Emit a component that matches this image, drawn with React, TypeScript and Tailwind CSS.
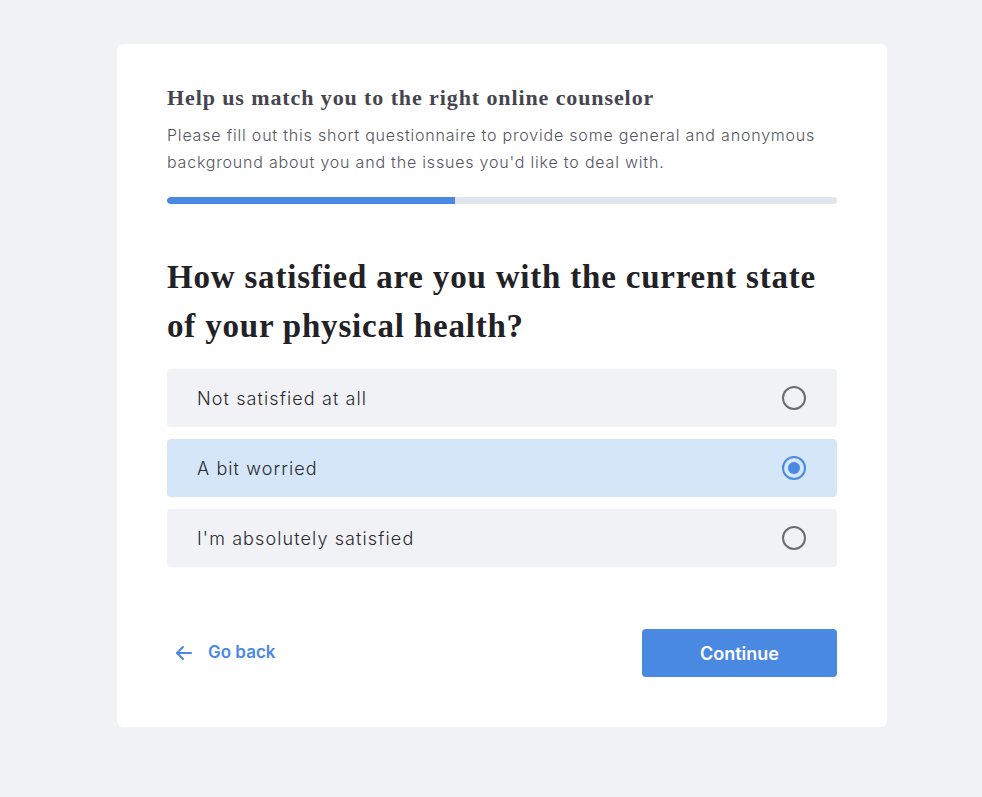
import React, { useState } from 'react'

const options = ['Not satisfied at all', 'A bit worried', "I'm absolutely satisfied"]

const serif = { fontFamily: '"Liberation Serif", "DejaVu Serif", serif' }

export default function App() {
  const [selected, setSelected] = useState(1)

  return (
    <div className="min-h-[797px] w-full bg-[#f1f2f6] pl-[117px] pt-[44px] font-['Inter',sans-serif]">
      <div className="w-[770px] rounded-md bg-white px-[50px] pb-[50px] pt-[40px]">
        {/* Intro */}
        <h2
          className="text-[22px] font-bold leading-[28px] tracking-[0.9px] text-[#45454f]"
          style={serif}
        >
          Help us match you to the right online counselor
        </h2>
        <p className="mt-[10px] text-[16px] font-light leading-[27px] tracking-wider text-[#55555e]">
          Please fill out this short questionnaire to provide some general and anonymous
          background about you and the issues you'd like to deal with.
        </p>

        {/* Progress */}
        <div className="mt-[21px] h-[7px] w-full overflow-hidden rounded-full bg-[#e2e5ee]">
          <div className="h-full rounded-l-full bg-[#4a89e2]" style={{ width: '43%' }} />
        </div>

        {/* Question */}
        <h1
          className="mt-[49px] text-[33px] font-bold leading-[49px] tracking-[0.8px] text-[#222226]"
          style={serif}
        >
          How satisfied are you with the current state of your physical health?
        </h1>

        <div className="mt-[18px] flex flex-col gap-[12px]">
          {options.map((opt, i) => {
            const active = i === selected
            return (
              <button
                key={opt}
                onClick={() => setSelected(i)}
                className={`flex h-[58px] items-center justify-between rounded-[4px] pl-[30px] pr-[31px] text-left ${
                  active ? 'bg-[#d5e6f8]' : 'bg-[#f1f2f6]'
                }`}
              >
                <span className="text-[18px] font-light tracking-[1.1px] text-[#2a2a30]">{opt}</span>
                {active ? (
                  <span className="flex h-[24px] w-[24px] items-center justify-center rounded-full border-2 border-[#4a89e2]">
                    <span className="h-[12px] w-[12px] rounded-full bg-[#4a89e2]" />
                  </span>
                ) : (
                  <span className="h-[24px] w-[24px] rounded-full border-2 border-[#6b6b70]" />
                )}
              </button>
            )
          })}
        </div>

        {/* Actions */}
        <div className="mt-[62px] flex items-center justify-between">
          <button className="flex items-center gap-[14px] pl-[7px] text-[17px] font-semibold text-[#4a89e2]">
            <svg width="20" height="20" viewBox="0 0 20 20" fill="none" stroke="currentColor" strokeWidth="2" strokeLinecap="round" strokeLinejoin="round">
              <path d="M17 10H3" />
              <path d="M9 4L3 10L9 16" />
            </svg>
            Go back
          </button>
          <button className="h-[48px] w-[195px] rounded-[4px] bg-[#4a89e2] text-[18px] font-semibold text-white">
            Continue
          </button>
        </div>
      </div>
    </div>
  )
}
